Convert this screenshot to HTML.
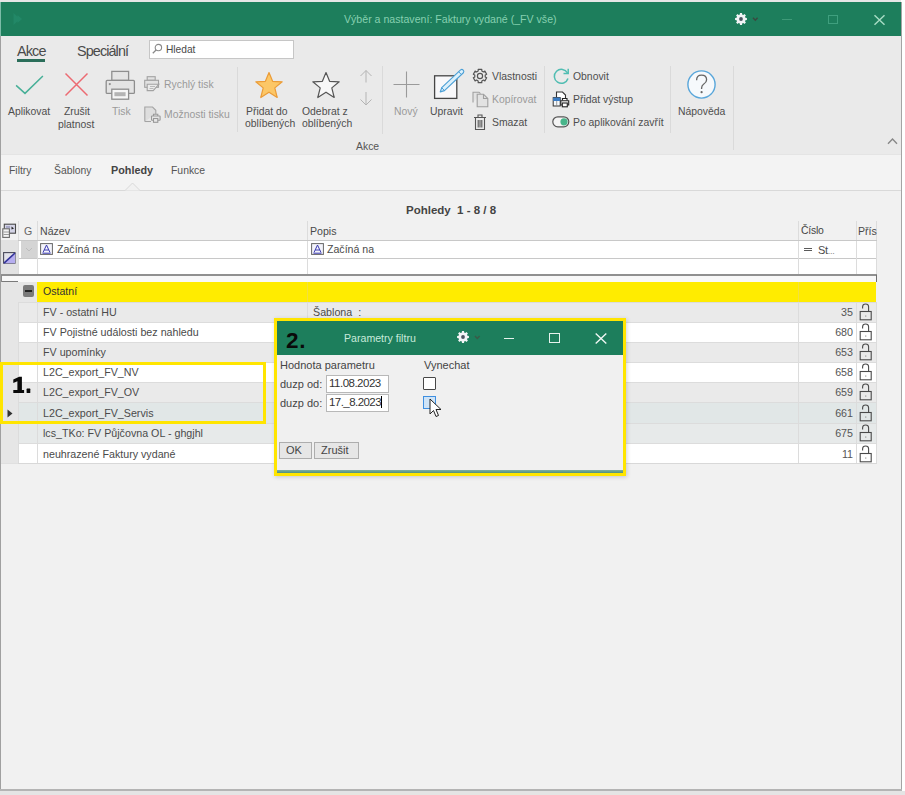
<!DOCTYPE html>
<html><head><meta charset="utf-8">
<style>
html,body{margin:0;padding:0;}
body{width:905px;height:795px;overflow:hidden;position:relative;background:#ffffff;font-family:"Liberation Sans",sans-serif;color:#444;}
.a{position:absolute;}
.t{position:absolute;white-space:nowrap;line-height:1;}
svg{position:absolute;overflow:visible;}
</style></head><body>
<!-- top strip -->
<div class="a" style="left:0;top:0;width:901px;height:2px;background:#e6e6e6"></div>
<!-- bottom strip -->
<div class="a" style="left:0;top:791px;width:905px;height:4px;background:#e4e4e4"></div>
<!-- window -->
<div class="a" style="left:0;top:2px;width:901px;height:789px;background:#f1f1f1;border-left:1px solid #a0a0a0;border-right:1px solid #a4a4a4;box-sizing:border-box;width:902px"></div>
<div class="a" style="left:0;top:789px;width:902px;height:2px;background:#b4b4b4"></div>
<!-- title bar -->
<div class="a" style="left:1px;top:2px;width:900px;height:34px;background:#1d7e5c"></div>
<!-- ribbon -->
<div class="a" style="left:1px;top:36px;width:900px;height:118px;background:#eaeaea"></div>
<!-- tab strip -->
<div class="a" style="left:1px;top:154px;width:900px;height:36px;background:#f3f3f3"></div>
<div class="a" style="left:1px;top:154px;width:900px;height:1px;background:#e4e4e4"></div>
<div class="a" style="left:1px;top:190px;width:900px;height:1px;background:#d9d9d9"></div>


<!-- title content -->
<svg style="left:12px;top:12px" width="14" height="14" viewBox="0 0 14 14"><path d="M1.5 1 L8 7 L1.5 13 Z M5.5 3 L10 7 L5.5 11 Z" fill="#2a9575" opacity="0.45"/></svg><div class="a" style="left:0;top:2px;width:1px;height:34px;background:#7cbca8"></div>
<div class="t" style="left:344px;top:14px;font-size:10.6px;color:#86d0b0">Výběr a nastavení: Faktury vydané (_FV vše)</div>
<svg style="left:734px;top:12px" width="26" height="14" viewBox="0 0 26 14"><path d="M5.87 2.54 L5.95 1.09 L8.05 1.09 L8.13 2.54 L9.36 3.05 L10.43 2.08 L11.92 3.57 L10.95 4.64 L11.46 5.87 L12.91 5.95 L12.91 8.05 L11.46 8.13 L10.95 9.36 L11.92 10.43 L10.43 11.92 L9.36 10.95 L8.13 11.46 L8.05 12.91 L5.95 12.91 L5.87 11.46 L4.64 10.95 L3.57 11.92 L2.08 10.43 L3.05 9.36 L2.54 8.13 L1.09 8.05 L1.09 5.95 L2.54 5.87 L3.05 4.64 L2.08 3.57 L3.57 2.08 L4.64 3.05 Z" fill="#f2f4f6"/><circle cx="7" cy="7" r="1.9" fill="#4b5560"/><path d="M19 5.8 L21.3 8.2 L23.6 5.8" stroke="#3a4a40" stroke-width="1.5" fill="none"/></svg>
<div class="a" style="left:782px;top:19px;width:10px;height:1.3px;background:#3f9a78"></div>
<div class="a" style="left:828px;top:14.5px;width:9.5px;height:9.5px;border:1.4px solid #3f9f7e;box-sizing:border-box"></div>
<svg style="left:874px;top:15px" width="11" height="10" viewBox="0 0 11 10"><path d="M0.5 0.2 L10.5 9.8 M10.5 0.2 L0.5 9.8" stroke="#a6dbc3" stroke-width="1.5"/></svg>

<!-- ribbon tabs -->
<div class="t" style="left:17px;top:44px;font-size:14.4px;letter-spacing:-0.85px;color:#4a4a4a">Akce</div>
<div class="a" style="left:17px;top:59px;width:28px;height:3px;background:#2b6e5a"></div>
<div class="t" style="left:77px;top:44px;font-size:14.4px;letter-spacing:-0.9px;color:#4a4a4a">Speciální</div>
<div class="a" style="left:149px;top:40px;width:145px;height:19px;background:#fff;border:1px solid #c6c6c6;box-sizing:border-box"></div>
<svg style="left:152px;top:43px" width="12" height="12" viewBox="0 0 12 12"><circle cx="6.4" cy="4.6" r="3.2" fill="none" stroke="#8a8a8a" stroke-width="1.1"/><path d="M4.1 7 L0.8 10.3" stroke="#8a8a8a" stroke-width="1.3"/></svg>
<div class="t" style="left:166px;top:45px;font-size:10.2px;color:#4a4a4a">Hledat</div>

<!-- big buttons -->
<svg style="left:15px;top:74px" width="30" height="22" viewBox="0 0 30 22"><path d="M1.1 11.4 L10 19.4 L27.9 2" fill="none" stroke="#48b098" stroke-width="1.5"/></svg>
<svg style="left:64px;top:72px" width="25" height="25" viewBox="0 0 25 25"><path d="M1.5 1.5 L23.5 23.5 M23.5 1.5 L1.5 23.5" fill="none" stroke="#ec6a72" stroke-width="1.5"/></svg>
<svg style="left:105px;top:70px" width="31" height="31" viewBox="0 0 31 31"><g stroke="#8e8e8e" stroke-width="1.3"><rect x="6.8" y="1.4" width="16.8" height="9" fill="#e4e4e4"/><rect x="1.2" y="10.4" width="28.2" height="13" rx="1" fill="#e4e4e4"/><rect x="6.8" y="19.2" width="16.8" height="10" fill="#f6f6f6"/></g><rect x="9.4" y="22.2" width="11.2" height="4" fill="#b4b4b4"/><circle cx="4.8" cy="14.1" r="1.1" fill="#8e8e8e"/></svg>
<div class="t" style="left:8px;top:107px;font-size:10.4px;color:#4e4e4e">Aplikovat</div>
<div class="t" style="left:64px;top:107px;font-size:10.4px;color:#4e4e4e">Zrušit</div>
<div class="t" style="left:58px;top:120px;font-size:10.4px;color:#4e4e4e">platnost</div>
<div class="t" style="left:112px;top:107px;font-size:10.4px;color:#9a9a9a">Tisk</div>

<!-- small print buttons -->
<svg style="left:144px;top:76px" width="17" height="17" viewBox="0 0 17 17"><g stroke="#a2a2a2" stroke-width="1.1" fill="#e2e2e2"><rect x="3.2" y="0.7" width="8" height="3.6"/><rect x="0.7" y="4.3" width="13.8" height="7"/><path d="M3.2 8.3 V14.6 H9.2 L14.8 8.3 Z" fill="#ebebeb"/></g><path d="M6 10.5 H11 M5.5 12.5 H9.5" stroke="#b4b4b4" stroke-width="0.9"/></svg>
<div class="t" style="left:164px;top:80px;font-size:10.4px;color:#9a9a9a">Rychlý tisk</div>
<svg style="left:144px;top:106px" width="17" height="18" viewBox="0 0 17 18"><path d="M0.8 15.5 V1 H8.5 L11.8 4.3 V8" fill="#dedede" stroke="#a4a4a4" stroke-width="1.1"/><path d="M0.8 15.5 H7" stroke="#a4a4a4" stroke-width="1.1"/><g fill="#e8e8e8" stroke="#999" stroke-width="1.1"><path d="M9.5 10 V8.2 H13.8 V10"/><rect x="7.5" y="10" width="8.6" height="4.2" rx="0.5"/><rect x="9.5" y="12.5" width="4.3" height="3.8"/></g></svg>
<div class="t" style="left:164px;top:110px;font-size:10.4px;color:#9a9a9a">Možnosti tisku</div>
<div class="a" style="left:237px;top:67px;width:1px;height:65px;background:#dadada"></div>

<!-- favourites -->
<svg style="left:254px;top:71px" width="30" height="29" viewBox="0 0 30 29"><path d="M15 1.5 L18.6 10.3 L28.2 10.8 L20.8 16.9 L23.2 26.5 L15 21.2 L6.8 26.5 L9.2 16.9 L1.8 10.8 L11.4 10.3 Z" fill="#fcc767" stroke="#eb9c38" stroke-width="1.2" stroke-linejoin="round"/></svg>
<div class="t" style="left:246px;top:107px;font-size:10.4px;color:#4e4e4e">Přidat do</div>
<div class="t" style="left:245px;top:119px;font-size:10.4px;color:#4e4e4e">oblíbených</div>
<svg style="left:311px;top:71px" width="30" height="29" viewBox="0 0 30 29"><path d="M15 1.5 L18.6 10.3 L28.2 10.8 L20.8 16.9 L23.2 26.5 L15 21.2 L6.8 26.5 L9.2 16.9 L1.8 10.8 L11.4 10.3 Z" fill="#f8f8f8" stroke="#555" stroke-width="1.2" stroke-linejoin="round"/></svg>
<div class="t" style="left:302px;top:107px;font-size:10.4px;color:#4e4e4e">Odebrat z</div>
<div class="t" style="left:302px;top:119px;font-size:10.4px;color:#4e4e4e">oblíbených</div>
<svg style="left:359px;top:69px" width="14" height="38" viewBox="0 0 14 38"><g fill="none" stroke="#b4b4b4" stroke-width="1"><path d="M7 1.5 V13.5 M1.5 7 L7 1.5 L12.5 7"/><path d="M7 23 V36 M1.5 30.5 L7 36 L12.5 30.5"/></g></svg>
<div class="a" style="left:382px;top:66px;width:1px;height:68px;background:#dadada"></div>

<!-- new / edit -->
<svg style="left:393px;top:71px" width="28" height="28" viewBox="0 0 28 28"><path d="M13.5 0.5 V26.5 M0.5 13.5 H26.5" stroke="#9a9a9a" stroke-width="1.1"/></svg>
<div class="t" style="left:394px;top:107px;font-size:10.4px;color:#9a9a9a">Nový</div>
<svg style="left:432px;top:69px" width="34" height="31" viewBox="0 0 34 31"><rect x="2.6" y="6.8" width="22.2" height="22.6" fill="#f8f8fa" stroke="#454545" stroke-width="1.3"/><path d="M8.2 22.9 L9.73 18.7 L28.6 0.85 A2.05 2.05 0 0 1 31.4 3.75 L12.47 21.6 Z" fill="#dcf0fb" stroke="#4a9fd6" stroke-width="1.1" stroke-linejoin="round"/><path d="M9.73 18.7 L12.47 21.6 M26.6 2.7 L29.4 5.6" stroke="#4a9fd6" stroke-width="1"/></svg>
<div class="t" style="left:430px;top:107px;font-size:10.4px;color:#4e4e4e">Upravit</div>
<div class="t" style="left:356px;top:142px;font-size:10.4px;color:#555">Akce</div>

<!-- props col -->
<svg style="left:472px;top:68px" width="16" height="16" viewBox="0 0 16 16"><path d="M6.17 3.03 L6.21 1.34 L9.79 1.34 L9.83 3.03 L11.39 3.93 L12.88 3.12 L14.66 6.21 L13.22 7.10 L13.22 8.90 L14.66 9.79 L12.88 12.88 L11.39 12.07 L9.83 12.97 L9.79 14.66 L6.21 14.66 L6.17 12.97 L4.61 12.07 L3.12 12.88 L1.34 9.79 L2.78 8.90 L2.78 7.10 L1.34 6.21 L3.12 3.12 L4.61 3.93 Z" fill="none" stroke="#555" stroke-width="1.2" stroke-linejoin="round"/><circle cx="8" cy="8" r="2.6" fill="none" stroke="#555" stroke-width="1.2"/></svg>
<div class="t" style="left:492px;top:72px;font-size:10.4px;color:#4e4e4e">Vlastnosti</div>
<svg style="left:472px;top:91px" width="17" height="17" viewBox="0 0 17 17"><g fill="#e2e2e2" stroke="#a0a0a0" stroke-width="1.1"><path d="M1 11.5 V1.2 H7 L8.5 2.7"/><path d="M5.2 15.8 V3.2 H11.5 L15.8 7.5 V15.8 Z"/><path d="M11.5 3.2 V7.5 H15.8" fill="none"/></g></svg>
<div class="t" style="left:492px;top:95px;font-size:10.4px;color:#9a9a9a">Kopírovat</div>
<svg style="left:473px;top:114px" width="14" height="17" viewBox="0 0 14 17"><g fill="none" stroke="#555" stroke-width="1.1"><path d="M1 3.5 H13 M5 3.5 V1 H9 V3.5"/><path d="M2.5 3.5 V15.5 H11.5 V3.5"/><path d="M5.2 6 V13.5 M7 6 V13.5 M8.8 6 V13.5"/></g></svg>
<div class="t" style="left:492px;top:118px;font-size:10.4px;color:#4e4e4e">Smazat</div>
<div class="a" style="left:544px;top:66px;width:1px;height:67px;background:#dadada"></div>

<!-- refresh col -->
<svg style="left:552px;top:68px" width="19" height="17" viewBox="0 0 19 17"><path d="M15.5 5 A7 7 0 1 0 16 10.5" fill="none" stroke="#50bdb2" stroke-width="1.5"/><path d="M11.5 5.5 H16.2 V0.8" fill="none" stroke="#50bdb2" stroke-width="1.5"/></svg>
<div class="t" style="left:573px;top:72px;font-size:10.4px;color:#4e4e4e">Obnovit</div>
<svg style="left:552px;top:91px" width="18" height="17" viewBox="0 0 18 17"><path d="M4.5 6.5 V1 H10.5 L13.5 4 V7" fill="#fff" stroke="#333" stroke-width="1.1"/><rect x="1.2" y="6.6" width="7" height="8.4" fill="#f4f8fc" stroke="#333" stroke-width="1"/><rect x="1.2" y="6.6" width="7" height="3.4" fill="#3b7cc4"/><path d="M4.7 10 V15" stroke="#888" stroke-width="0.8"/><g fill="#fff" stroke="#222" stroke-width="1.1"><path d="M10.5 9.5 V7.5 H15 V9.5"/><path d="M10 14 H8.8 V9.8 H16.7 V14 H15.5"/><rect x="10.3" y="12" width="5" height="3.8"/></g></svg>
<div class="t" style="left:573px;top:95px;font-size:10.4px;color:#4e4e4e">Přidat výstup</div>
<svg style="left:552px;top:116px" width="18" height="12" viewBox="0 0 18 12"><rect x="0.8" y="0.8" width="16" height="10" rx="5" fill="#f4f4f4" stroke="#555" stroke-width="1.2"/><circle cx="12" cy="5.8" r="3.6" fill="#47b58a"/></svg>
<div class="t" style="left:573px;top:118px;font-size:10.4px;color:#4e4e4e">Po aplikování zavřít</div>
<div class="a" style="left:670px;top:66px;width:1px;height:67px;background:#dadada"></div>

<!-- help -->
<svg style="left:686px;top:69px" width="31" height="31" viewBox="0 0 31 31"><circle cx="15.5" cy="15.5" r="13.6" fill="#f6f9fc" stroke="#58a6da" stroke-width="1.4"/><path d="M10.6 11.2 Q10.6 6.2 15.5 6.2 Q20.6 6.2 20.6 10.8 Q20.6 13.4 17.8 15 Q15.6 16.3 15.6 19 V20" fill="none" stroke="#666" stroke-width="1.3"/><circle cx="15.6" cy="23.2" r="1.1" fill="#666"/></svg>
<div class="t" style="left:678px;top:107px;font-size:10.4px;color:#4e4e4e">Nápověda</div>
<div class="a" style="left:733px;top:66px;width:1px;height:84px;background:#dadada"></div>
<svg style="left:887px;top:137px" width="12" height="8" viewBox="0 0 12 8"><path d="M1 6.8 L5.5 2 L10 6.8" fill="none" stroke="#888" stroke-width="1.4"/></svg>

<!-- tab strip -->
<div class="t" style="left:9px;top:166px;font-size:10.4px;color:#555">Filtry</div>
<div class="t" style="left:54px;top:166px;font-size:10.4px;color:#555">Šablony</div>
<div class="t" style="left:111px;top:165px;font-size:10.8px;color:#444;font-weight:bold">Pohledy</div>
<div class="t" style="left:171px;top:166px;font-size:10.4px;color:#555">Funkce</div>
<svg style="left:125px;top:182px" width="16" height="10" viewBox="0 0 16 10"><path d="M0 8.5 L7.5 1 L15 8.5" fill="#f1f1f1" stroke="#d9d9d9" stroke-width="1"/></svg>


<!-- grid -->
<div class="t" style="left:406px;top:205px;font-size:11.5px;font-weight:bold;color:#444;white-space:pre">Pohledy  1 - 8 / 8</div>
<!-- header row -->
<div class="a" style="left:18px;top:221px;width:1px;height:19px;background:#dcdcdc"></div>
<div class="a" style="left:37px;top:221px;width:1px;height:19px;background:#dcdcdc"></div>
<div class="a" style="left:307px;top:221px;width:1px;height:19px;background:#dcdcdc"></div>
<div class="a" style="left:798px;top:221px;width:1px;height:19px;background:#dcdcdc"></div>
<div class="a" style="left:856px;top:221px;width:1px;height:19px;background:#dcdcdc"></div>
<div class="a" style="left:876px;top:221px;width:1px;height:19px;background:#dcdcdc"></div>
<div class="t" style="left:24px;top:226px;font-size:10.6px;color:#666">G</div>
<div class="t" style="left:40px;top:226px;font-size:10.6px;color:#4a4a4a">Název</div>
<div class="t" style="left:310px;top:226px;font-size:10.6px;color:#4a4a4a">Popis</div>
<div class="t" style="left:801px;top:226px;font-size:10.4px;letter-spacing:-0.2px;color:#444">Číslo</div>
<div class="t" style="left:858px;top:226px;font-size:10.6px;color:#4a4a4a">Přís</div>
<!-- left icons -->
<svg style="left:2px;top:223px" width="15" height="16" viewBox="0 0 15 16"><rect x="2.3" y="1.2" width="11.2" height="9" fill="#d4d4e6" stroke="#4a4a4a" stroke-width="1.1"/><path d="M4 4 H8 M4 7 H7" stroke="#7a7aa8" stroke-width="1"/><path d="M9.5 3.5 L12 5.5 L9.5 6.5 Z" fill="#222"/><rect x="0.8" y="5.8" width="6.6" height="8.6" fill="#f4f4f4" stroke="#6a6a6a" stroke-width="1.1"/><path d="M1.5 9 H7 M1.5 11.5 H7" stroke="#9a9a9a" stroke-width="1"/></svg>
<div class="a" style="left:1px;top:240px;width:17px;height:35px;background:#e2e2e2"></div>
<svg style="left:3px;top:252px" width="13" height="12" viewBox="0 0 13 12"><rect x="0.6" y="0.6" width="11.4" height="10.6" fill="#e2e2ea" stroke="#4a4a5a" stroke-width="1.1"/><path d="M12 1 V11.2 H1 Z" fill="#b6aef0"/><path d="M1 11.2 L12 1" stroke="#34349a" stroke-width="1.6"/></svg>
<!-- filter row -->
<div class="a" style="left:19px;top:240px;width:857px;height:35px;background:#ffffff"></div>
<div class="a" style="left:18px;top:240px;width:859px;height:1px;background:#c8c8c8"></div>
<div class="a" style="left:21px;top:241px;width:16px;height:17px;background:#d4d4d4"></div><svg style="left:25px;top:247px" width="8" height="5" viewBox="0 0 8 5"><path d="M1 1 L4 4 L7 1" fill="none" stroke="#bdbdbd" stroke-width="1"/></svg>
<div class="a" style="left:18px;top:258px;width:859px;height:1px;background:#c8c8c8"></div>
<div class="a" style="left:18px;top:241px;width:1px;height:34px;background:#dcdcdc"></div>
<div class="a" style="left:37px;top:241px;width:1px;height:34px;background:#dcdcdc"></div>
<div class="a" style="left:307px;top:241px;width:1px;height:34px;background:#dcdcdc"></div>
<div class="a" style="left:798px;top:241px;width:1px;height:34px;background:#dcdcdc"></div>
<div class="a" style="left:856px;top:241px;width:1px;height:34px;background:#dcdcdc"></div>
<div class="a" style="left:876px;top:241px;width:1px;height:34px;background:#dcdcdc"></div>
<svg style="left:40px;top:243px" width="13" height="12" viewBox="0 0 13 12"><rect x="0.6" y="0.6" width="11.8" height="10.8" fill="#f4f4fb" stroke="#666" stroke-width="1"/><path d="M3 9.5 L6.5 2 L10 9.5 M4.2 7 H8.8 M2.5 10.2 H10.5" fill="none" stroke="#3a3ab0" stroke-width="1"/></svg>
<div class="t" style="left:57px;top:244px;font-size:10.6px;color:#4a4a4a">Začíná na</div>
<svg style="left:311px;top:243px" width="13" height="12" viewBox="0 0 13 12"><rect x="0.6" y="0.6" width="11.8" height="10.8" fill="#f4f4fb" stroke="#666" stroke-width="1"/><path d="M3 9.5 L6.5 2 L10 9.5 M4.2 7 H8.8 M2.5 10.2 H10.5" fill="none" stroke="#3a3ab0" stroke-width="1"/></svg>
<div class="t" style="left:327px;top:244px;font-size:10.6px;color:#4a4a4a">Začíná na</div>
<div class="a" style="left:804px;top:247.5px;width:8px;height:1.2px;background:#5a5a5a"></div><div class="a" style="left:804px;top:250.3px;width:8px;height:1.2px;background:#5a5a5a"></div><div class="t" style="left:818px;top:245px;font-size:11px;letter-spacing:-0.3px;color:#4a4a4a">St<span style="font-size:9px;color:#888">...</span></div>
<div class="a" style="left:1px;top:274px;width:876px;height:2px;background:#909090"></div>
<div class="a" style="left:1px;top:276px;width:876px;height:6px;background:#f8f8f8"></div>
<div class="a" style="left:1px;top:281px;width:17px;height:1px;background:#7a7a7a"></div><div class="a" style="left:1px;top:275px;width:1px;height:7px;background:#8a8a8a"></div>
<div class="a" style="left:876px;top:275px;width:1px;height:7px;background:#707070"></div>
<!-- group row -->
<div class="a" style="left:1px;top:282px;width:36px;height:20px;background:#e6e6e6"></div>
<div class="a" style="left:37px;top:282px;width:839px;height:20px;background:#ffec00"></div>
<div class="a" style="left:307px;top:282px;width:1px;height:20px;background:#f2e040"></div>
<div class="a" style="left:798px;top:282px;width:1px;height:20px;background:#f2e040"></div>
<div class="a" style="left:23px;top:285px;width:11px;height:12px;background:#7a7a7a;border-radius:2px"></div>
<div class="a" style="left:25px;top:290px;width:7px;height:2px;background:#222"></div>
<div class="t" style="left:43px;top:286px;font-size:10.6px;color:#333">Ostatní</div>
<div class="a" style="left:1px;top:302px;width:17px;height:20px;background:#e6e6e6"></div>
<div class="a" style="left:19px;top:302px;width:857px;height:20px;background:#eaeaea"></div>
<div class="a" style="left:18px;top:302px;width:859px;height:1px;background:#dcdcdc"></div>
<div class="a" style="left:18px;top:302px;width:1px;height:20px;background:#dcdcdc"></div>
<div class="a" style="left:37px;top:302px;width:1px;height:20px;background:#dcdcdc"></div>
<div class="a" style="left:307px;top:302px;width:1px;height:20px;background:#dcdcdc"></div>
<div class="a" style="left:798px;top:302px;width:1px;height:20px;background:#dcdcdc"></div>
<div class="a" style="left:856px;top:302px;width:1px;height:20px;background:#dcdcdc"></div>
<div class="a" style="left:876px;top:302px;width:1px;height:20px;background:#dcdcdc"></div>
<div class="t" style="left:43px;top:307px;font-size:10.7px;color:#4a4a4a">FV - ostatní HU</div>
<div class="t" style="left:313px;top:307px;font-size:10.7px;color:#4a4a4a;white-space:pre">Šablona  :</div>
<div class="t" style="left:800px;width:53px;text-align:right;top:307px;font-size:10.7px;color:#555">35</div>
<svg style="left:859px;top:302px" width="14" height="20" viewBox="0 0 14 20"><g fill="none" stroke="#4a4a4a" stroke-width="1.1"><path d="M3.6 6.5 V4.8 Q3.6 2 6.6 2 Q9.6 2 9.6 4.8 V9.5"/><rect x="1.2" y="9.5" width="11" height="8.3"/></g><rect x="6.2" y="13.5" width="1.1" height="1.1" fill="#888"/></svg>
<div class="a" style="left:1px;top:322px;width:17px;height:20px;background:#e6e6e6"></div>
<div class="a" style="left:19px;top:322px;width:857px;height:20px;background:#ffffff"></div>
<div class="a" style="left:18px;top:322px;width:859px;height:1px;background:#dcdcdc"></div>
<div class="a" style="left:18px;top:322px;width:1px;height:20px;background:#dcdcdc"></div>
<div class="a" style="left:37px;top:322px;width:1px;height:20px;background:#dcdcdc"></div>
<div class="a" style="left:307px;top:322px;width:1px;height:20px;background:#dcdcdc"></div>
<div class="a" style="left:798px;top:322px;width:1px;height:20px;background:#dcdcdc"></div>
<div class="a" style="left:856px;top:322px;width:1px;height:20px;background:#dcdcdc"></div>
<div class="a" style="left:876px;top:322px;width:1px;height:20px;background:#dcdcdc"></div>
<div class="t" style="left:43px;top:327px;font-size:10.7px;color:#4a4a4a">FV Pojistné události bez nahledu</div>
<div class="t" style="left:800px;width:53px;text-align:right;top:327px;font-size:10.7px;color:#555">680</div>
<svg style="left:859px;top:322px" width="14" height="20" viewBox="0 0 14 20"><g fill="none" stroke="#4a4a4a" stroke-width="1.1"><path d="M3.6 6.5 V4.8 Q3.6 2 6.6 2 Q9.6 2 9.6 4.8 V9.5"/><rect x="1.2" y="9.5" width="11" height="8.3"/></g><rect x="6.2" y="13.5" width="1.1" height="1.1" fill="#888"/></svg>
<div class="a" style="left:1px;top:342px;width:17px;height:20px;background:#e6e6e6"></div>
<div class="a" style="left:19px;top:342px;width:857px;height:20px;background:#eaeaea"></div>
<div class="a" style="left:18px;top:342px;width:859px;height:1px;background:#dcdcdc"></div>
<div class="a" style="left:18px;top:342px;width:1px;height:20px;background:#dcdcdc"></div>
<div class="a" style="left:37px;top:342px;width:1px;height:20px;background:#dcdcdc"></div>
<div class="a" style="left:307px;top:342px;width:1px;height:20px;background:#dcdcdc"></div>
<div class="a" style="left:798px;top:342px;width:1px;height:20px;background:#dcdcdc"></div>
<div class="a" style="left:856px;top:342px;width:1px;height:20px;background:#dcdcdc"></div>
<div class="a" style="left:876px;top:342px;width:1px;height:20px;background:#dcdcdc"></div>
<div class="t" style="left:43px;top:347px;font-size:10.7px;color:#4a4a4a">FV upomínky</div>
<div class="t" style="left:800px;width:53px;text-align:right;top:347px;font-size:10.7px;color:#555">653</div>
<svg style="left:859px;top:342px" width="14" height="20" viewBox="0 0 14 20"><g fill="none" stroke="#4a4a4a" stroke-width="1.1"><path d="M3.6 6.5 V4.8 Q3.6 2 6.6 2 Q9.6 2 9.6 4.8 V9.5"/><rect x="1.2" y="9.5" width="11" height="8.3"/></g><rect x="6.2" y="13.5" width="1.1" height="1.1" fill="#888"/></svg>
<div class="a" style="left:1px;top:362px;width:17px;height:20px;background:#e6e6e6"></div>
<div class="a" style="left:19px;top:362px;width:857px;height:20px;background:#ffffff"></div>
<div class="a" style="left:18px;top:362px;width:859px;height:1px;background:#dcdcdc"></div>
<div class="a" style="left:18px;top:362px;width:1px;height:20px;background:#dcdcdc"></div>
<div class="a" style="left:37px;top:362px;width:1px;height:20px;background:#dcdcdc"></div>
<div class="a" style="left:307px;top:362px;width:1px;height:20px;background:#dcdcdc"></div>
<div class="a" style="left:798px;top:362px;width:1px;height:20px;background:#dcdcdc"></div>
<div class="a" style="left:856px;top:362px;width:1px;height:20px;background:#dcdcdc"></div>
<div class="a" style="left:876px;top:362px;width:1px;height:20px;background:#dcdcdc"></div>
<div class="t" style="left:43px;top:367px;font-size:10.7px;color:#4a4a4a">L2C_export_FV_NV</div>
<div class="t" style="left:800px;width:53px;text-align:right;top:367px;font-size:10.7px;color:#555">658</div>
<svg style="left:859px;top:362px" width="14" height="20" viewBox="0 0 14 20"><g fill="none" stroke="#4a4a4a" stroke-width="1.1"><path d="M3.6 6.5 V4.8 Q3.6 2 6.6 2 Q9.6 2 9.6 4.8 V9.5"/><rect x="1.2" y="9.5" width="11" height="8.3"/></g><rect x="6.2" y="13.5" width="1.1" height="1.1" fill="#888"/></svg>
<div class="a" style="left:1px;top:382px;width:17px;height:20px;background:#e6e6e6"></div>
<div class="a" style="left:19px;top:382px;width:857px;height:20px;background:#eaeaea"></div>
<div class="a" style="left:18px;top:382px;width:859px;height:1px;background:#dcdcdc"></div>
<div class="a" style="left:18px;top:382px;width:1px;height:20px;background:#dcdcdc"></div>
<div class="a" style="left:37px;top:382px;width:1px;height:20px;background:#dcdcdc"></div>
<div class="a" style="left:307px;top:382px;width:1px;height:20px;background:#dcdcdc"></div>
<div class="a" style="left:798px;top:382px;width:1px;height:20px;background:#dcdcdc"></div>
<div class="a" style="left:856px;top:382px;width:1px;height:20px;background:#dcdcdc"></div>
<div class="a" style="left:876px;top:382px;width:1px;height:20px;background:#dcdcdc"></div>
<div class="t" style="left:43px;top:387px;font-size:10.7px;color:#4a4a4a">L2C_export_FV_OV</div>
<div class="t" style="left:800px;width:53px;text-align:right;top:387px;font-size:10.7px;color:#555">659</div>
<svg style="left:859px;top:382px" width="14" height="20" viewBox="0 0 14 20"><g fill="none" stroke="#4a4a4a" stroke-width="1.1"><path d="M3.6 6.5 V4.8 Q3.6 2 6.6 2 Q9.6 2 9.6 4.8 V9.5"/><rect x="1.2" y="9.5" width="11" height="8.3"/></g><rect x="6.2" y="13.5" width="1.1" height="1.1" fill="#888"/></svg>
<div class="a" style="left:1px;top:402px;width:17px;height:21px;background:#e6e6e6"></div>
<div class="a" style="left:19px;top:402px;width:857px;height:21px;background:#e1e7e7"></div>
<div class="a" style="left:18px;top:402px;width:859px;height:1px;background:#dcdcdc"></div>
<div class="a" style="left:18px;top:402px;width:1px;height:21px;background:#dcdcdc"></div>
<div class="a" style="left:37px;top:402px;width:1px;height:21px;background:#dcdcdc"></div>
<div class="a" style="left:307px;top:402px;width:1px;height:21px;background:#dcdcdc"></div>
<div class="a" style="left:798px;top:402px;width:1px;height:21px;background:#dcdcdc"></div>
<div class="a" style="left:856px;top:402px;width:1px;height:21px;background:#dcdcdc"></div>
<div class="a" style="left:876px;top:402px;width:1px;height:21px;background:#dcdcdc"></div>
<div class="t" style="left:43px;top:408px;font-size:10.7px;color:#4a4a4a">L2C_export_FV_Servis</div>
<div class="t" style="left:800px;width:53px;text-align:right;top:408px;font-size:10.7px;color:#555">661</div>
<svg style="left:859px;top:403px" width="14" height="20" viewBox="0 0 14 20"><g fill="none" stroke="#4a4a4a" stroke-width="1.1"><path d="M3.6 6.5 V4.8 Q3.6 2 6.6 2 Q9.6 2 9.6 4.8 V9.5"/><rect x="1.2" y="9.5" width="11" height="8.3"/></g><rect x="6.2" y="13.5" width="1.1" height="1.1" fill="#888"/></svg>
<div class="a" style="left:1px;top:423px;width:17px;height:20px;background:#e6e6e6"></div>
<div class="a" style="left:19px;top:423px;width:857px;height:20px;background:#e7eaea"></div>
<div class="a" style="left:18px;top:423px;width:859px;height:1px;background:#dcdcdc"></div>
<div class="a" style="left:18px;top:423px;width:1px;height:20px;background:#dcdcdc"></div>
<div class="a" style="left:37px;top:423px;width:1px;height:20px;background:#dcdcdc"></div>
<div class="a" style="left:307px;top:423px;width:1px;height:20px;background:#dcdcdc"></div>
<div class="a" style="left:798px;top:423px;width:1px;height:20px;background:#dcdcdc"></div>
<div class="a" style="left:856px;top:423px;width:1px;height:20px;background:#dcdcdc"></div>
<div class="a" style="left:876px;top:423px;width:1px;height:20px;background:#dcdcdc"></div>
<div class="t" style="left:43px;top:428px;font-size:10.7px;color:#4a4a4a">lcs_TKo: FV Půjčovna OL - ghgjhl</div>
<div class="t" style="left:800px;width:53px;text-align:right;top:428px;font-size:10.7px;color:#555">675</div>
<svg style="left:859px;top:423px" width="14" height="20" viewBox="0 0 14 20"><g fill="none" stroke="#4a4a4a" stroke-width="1.1"><path d="M3.6 6.5 V4.8 Q3.6 2 6.6 2 Q9.6 2 9.6 4.8 V9.5"/><rect x="1.2" y="9.5" width="11" height="8.3"/></g><rect x="6.2" y="13.5" width="1.1" height="1.1" fill="#888"/></svg>
<div class="a" style="left:1px;top:443px;width:17px;height:20px;background:#e6e6e6"></div>
<div class="a" style="left:19px;top:443px;width:857px;height:20px;background:#ffffff"></div>
<div class="a" style="left:18px;top:443px;width:859px;height:1px;background:#dcdcdc"></div>
<div class="a" style="left:18px;top:443px;width:1px;height:20px;background:#dcdcdc"></div>
<div class="a" style="left:37px;top:443px;width:1px;height:20px;background:#dcdcdc"></div>
<div class="a" style="left:307px;top:443px;width:1px;height:20px;background:#dcdcdc"></div>
<div class="a" style="left:798px;top:443px;width:1px;height:20px;background:#dcdcdc"></div>
<div class="a" style="left:856px;top:443px;width:1px;height:20px;background:#dcdcdc"></div>
<div class="a" style="left:876px;top:443px;width:1px;height:20px;background:#dcdcdc"></div>
<div class="t" style="left:43px;top:449px;font-size:10.7px;color:#4a4a4a">neuhrazené Faktury vydané</div>
<div class="t" style="left:800px;width:53px;text-align:right;top:449px;font-size:10.7px;color:#555">11</div>
<svg style="left:859px;top:444px" width="14" height="20" viewBox="0 0 14 20"><g fill="none" stroke="#4a4a4a" stroke-width="1.1"><path d="M3.6 6.5 V4.8 Q3.6 2 6.6 2 Q9.6 2 9.6 4.8 V9.5"/><rect x="1.2" y="9.5" width="11" height="8.3"/></g><rect x="6.2" y="13.5" width="1.1" height="1.1" fill="#888"/></svg>
<div class="a" style="left:18px;top:463px;width:859px;height:1px;background:#d8d8d8"></div>
<div class="a" style="left:1px;top:463px;width:17px;height:1px;background:#e0e0e0"></div>
<svg style="left:7px;top:409px" width="6" height="9" viewBox="0 0 6 9"><path d="M0.5 0.5 L5.5 4.5 L0.5 8.5 Z" fill="#333"/></svg>

<!-- highlight 1 -->
<div class="a" style="left:0px;top:362px;width:266px;height:62px;border:3px solid #ffe500;box-sizing:border-box"></div>
<svg style="left:0;top:0" width="40" height="400" viewBox="0 0 40 400"><path d="M13.3 379.6 L19.2 376.8 L21.9 376.8 L21.9 390 L24.1 390 L24.1 393 L13.3 393 L13.3 390 L17.4 390 L17.4 381.2 L13.3 383 Z" fill="#0a0a0a"/><path d="M27.2 388.6 H29.8 Q30.3 388.6 30.3 389.2 V392.4 Q30.3 393 29.8 393 H27.2 Q26.6 393 26.6 392.4 V389.2 Q26.6 388.6 27.2 388.6 Z" fill="#0a0a0a"/></svg>


<!-- dialog -->
<div class="a" style="left:274px;top:318px;width:352px;height:158px;background:#ffe500;box-shadow:1px 1px 4px rgba(60,60,80,0.22)"></div>
<div class="a" style="left:277px;top:321px;width:346px;height:152px;background:#f0f0f0"></div>
<div class="a" style="left:277px;top:321px;width:346px;height:34px;background:#1d7e5c"></div>
<div class="a" style="left:277px;top:470px;width:346px;height:3px;background:linear-gradient(#7fb0a2,#4f9080)"></div>
<div class="t" style="left:286px;top:330px;font-size:22.5px;font-weight:bold;color:#0a0a0a;letter-spacing:0.8px">2.</div>
<div class="t" style="left:344px;top:333px;font-size:10.6px;color:#c8eadb">Parametry filtru</div>
<svg style="left:456px;top:330px" width="26" height="14" viewBox="0 0 26 14"><path d="M5.87 2.54 L5.95 1.09 L8.05 1.09 L8.13 2.54 L9.36 3.05 L10.43 2.08 L11.92 3.57 L10.95 4.64 L11.46 5.87 L12.91 5.95 L12.91 8.05 L11.46 8.13 L10.95 9.36 L11.92 10.43 L10.43 11.92 L9.36 10.95 L8.13 11.46 L8.05 12.91 L5.95 12.91 L5.87 11.46 L4.64 10.95 L3.57 11.92 L2.08 10.43 L3.05 9.36 L2.54 8.13 L1.09 8.05 L1.09 5.95 L2.54 5.87 L3.05 4.64 L2.08 3.57 L3.57 2.08 L4.64 3.05 Z" fill="#f2f4f6"/><circle cx="7" cy="7" r="1.9" fill="#4b5560"/><path d="M19 6 L21.3 8.4 L23.6 6" stroke="#3a5a48" stroke-width="1.5" fill="none"/></svg>
<div class="a" style="left:504px;top:337.5px;width:10px;height:1.4px;background:#e6f2ec"></div>
<div class="a" style="left:549px;top:333px;width:11px;height:10px;border:1.2px solid #e6f2ec;box-sizing:border-box"></div>
<svg style="left:595px;top:333px" width="12" height="11" viewBox="0 0 12 11"><path d="M0.7 0.5 L11.3 10.5 M11.3 0.5 L0.7 10.5" stroke="#f0f7f4" stroke-width="1.4"/></svg>
<div class="t" style="left:280px;top:360px;font-size:11px;color:#444">Hodnota parametru</div>
<div class="t" style="left:424px;top:360px;font-size:11px;color:#444">Vynechat</div>
<div class="t" style="left:280px;top:379px;font-size:11px;color:#444">duzp od:</div>
<div class="t" style="left:280px;top:398px;font-size:11px;color:#444">duzp do:</div>
<div class="a" style="left:326px;top:375px;width:63px;height:18px;background:#fff;border:1px solid #b8b8b8;box-sizing:border-box"></div>
<div class="a" style="left:326px;top:394px;width:63px;height:18px;background:#fff;border:1px solid #b8b8b8;box-sizing:border-box"></div>
<div class="t" style="left:329px;top:378px;font-size:11.5px;letter-spacing:-0.5px;color:#333">11.08.2023</div>
<div class="t" style="left:329px;top:397px;font-size:11.5px;letter-spacing:-0.55px;color:#333">17._8.2023</div>
<div class="a" style="left:381px;top:396px;width:1px;height:12px;background:#000"></div>
<div class="a" style="left:423px;top:377px;width:13px;height:13px;background:#fff;border:1.5px solid #474747;border-radius:1px;box-sizing:border-box"></div>
<div class="a" style="left:423px;top:396px;width:13px;height:13px;background:#cfe4f7;border:1.6px solid #3f8fe0;box-sizing:border-box"></div>
<svg style="left:428.5px;top:397.5px" width="16" height="22" viewBox="0 0 16 22"><path d="M1 1 V16 L4.5 12.5 L7 18.5 L9.5 17.5 L7 11.5 L12 11.5 Z" fill="#fff" stroke="#222" stroke-width="1"/></svg>
<div class="a" style="left:279px;top:442px;width:33px;height:17px;background:#e6e6e6;border:1px solid #adadad;box-sizing:border-box"></div>
<div class="a" style="left:314px;top:442px;width:45px;height:17px;background:#e6e6e6;border:1px solid #adadad;box-sizing:border-box"></div>
<div class="t" style="left:286px;top:445px;font-size:11px;color:#444">OK</div>
<div class="t" style="left:321px;top:445px;font-size:11px;color:#444">Zrušit</div>

</body></html>
